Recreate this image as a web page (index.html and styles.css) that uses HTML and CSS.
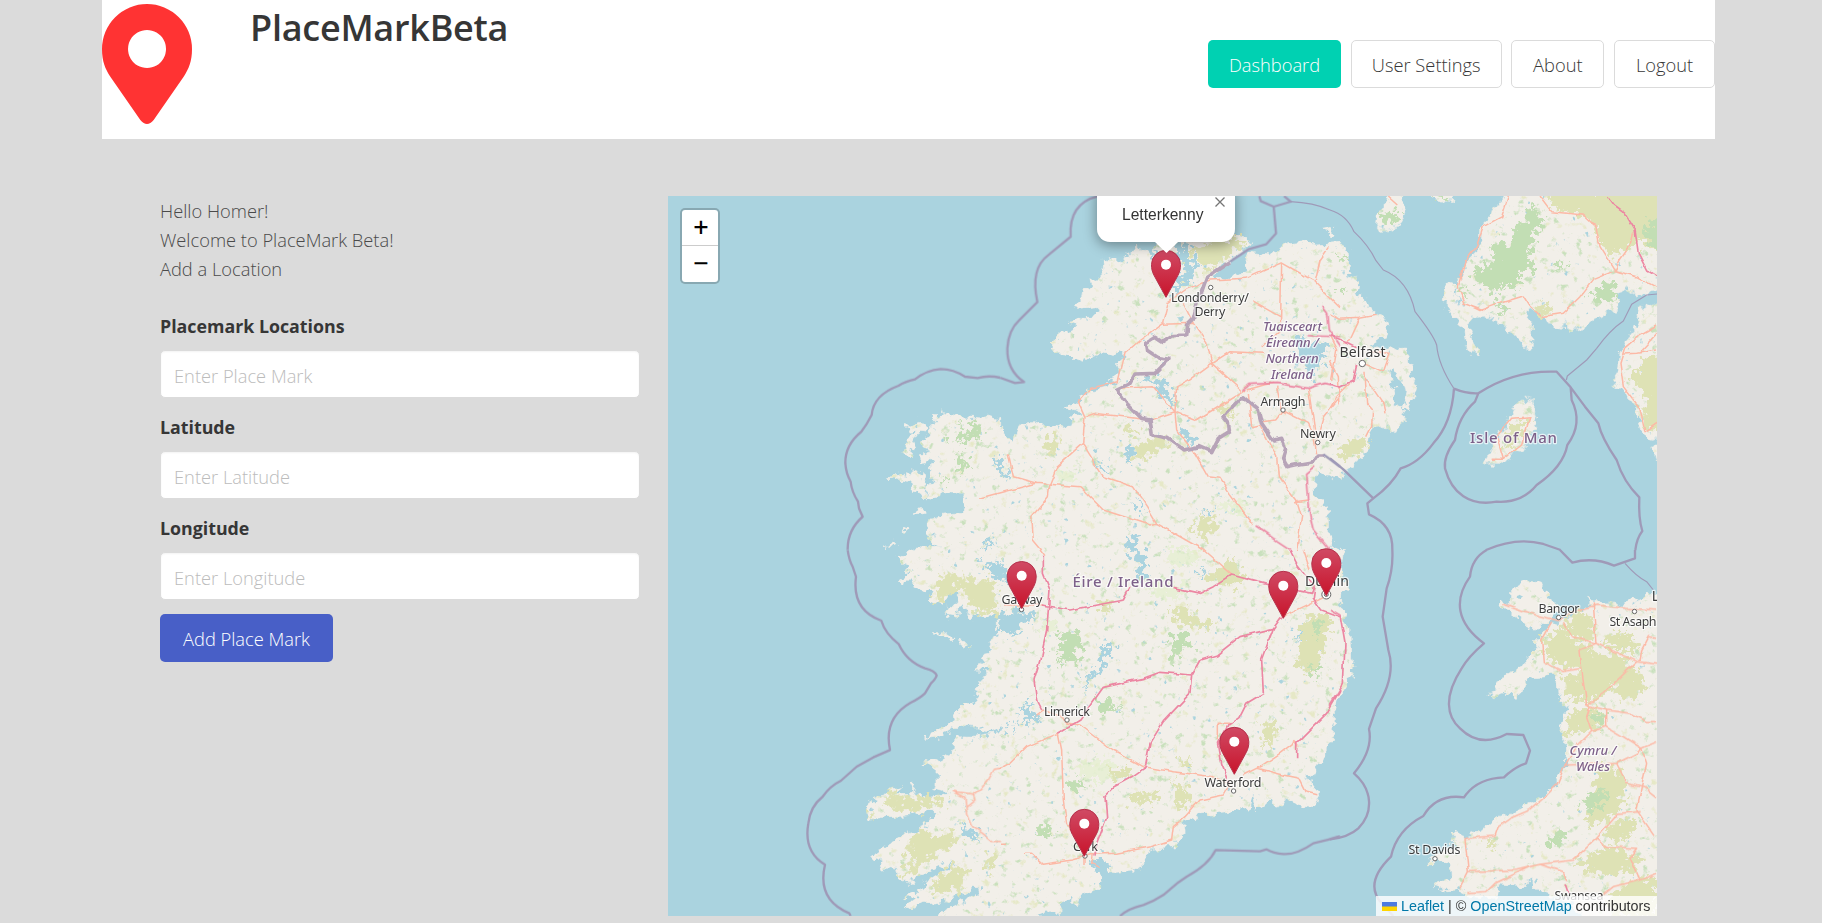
FILE: index.html
```html
<!DOCTYPE html>
<html lang="en">
<head>
<meta charset="utf-8">
<title>PlaceMarkBeta</title>
<link rel="stylesheet" href="styles.css">
</head>
<body>
<header class="navbar">
  <svg class="logo" viewBox="36 12 270 360" aria-hidden="true"><path fill="#f33" fill-rule="evenodd" d="M36 147A135 135 0 0 1 306 147C306 185 296 206 282 229L191 360Q171 384 151 360L60 229C46 206 36 185 36 147ZM171 90a57 57 0 1 0 .1 0Z"/></svg>
  <h1 class="title">PlaceMarkBeta</h1>
  <nav class="buttons">
    <a class="button is-primary">Dashboard</a>
    <a class="button wide">User Settings</a>
    <a class="button about">About</a>
    <a class="button logout">Logout</a>
  </nav>
</header>
<main class="columns">
  <section class="panel">
    <p class="intro">Hello Homer!<br>Welcome to PlaceMark Beta!<br>Add a Location</p>
    <form class="form">
      <label class="label" for="name">Placemark Locations</label>
      <input class="input" id="name" placeholder="Enter Place Mark">
      <label class="label" for="lat">Latitude</label>
      <input class="input" id="lat" placeholder="Enter Latitude">
      <label class="label" for="lng">Longitude</label>
      <input class="input" id="lng" placeholder="Enter Longitude">
      <button class="button is-link" type="button">Add Place Mark</button>
    </form>
  </section>
  <section class="map">
    <svg class="tiles" viewBox="668 196 989 720">
      <defs>
        <filter id="terrain" filterUnits="userSpaceOnUse" x="660" y="190" width="1010" height="733" color-interpolation-filters="sRGB">
          <feTurbulence type="fractalNoise" baseFrequency=".11" numOctaves="3" seed="4" result="n"/>
          <feColorMatrix in="n" values="1 0 0 0 0 0 1 0 0 0 0 0 1 0 0 0 0 0 0 1" result="n1"/>
          <feDisplacementMap in="SourceGraphic" in2="n1" scale="13" xChannelSelector="R" yChannelSelector="G" result="land"/>
          <feTurbulence type="fractalNoise" baseFrequency=".12" numOctaves="4" seed="11" result="v"/>
          <feColorMatrix in="v" values="0 0 0 0 .79 0 0 0 0 .88 0 0 0 0 .74 6 0 0 0 -3.85" result="green"/>
          <feComposite in="green" in2="land" operator="in" result="g"/>
          <feTurbulence type="fractalNoise" baseFrequency=".1" numOctaves="4" seed="29" result="w"/>
          <feColorMatrix in="w" values="0 0 0 0 .9 0 0 0 0 .91 0 0 0 0 .78 0 6 0 0 -4" result="tan"/>
          <feComposite in="tan" in2="land" operator="in" result="t"/>
          <feTurbulence type="fractalNoise" baseFrequency=".13" numOctaves="3" seed="63" result="x"/>
          <feColorMatrix in="x" values="0 0 0 0 .67 0 0 0 0 .83 0 0 0 0 .87 0 0 10 0 -7.5" result="pond"/>
          <feComposite in="pond" in2="land" operator="in" result="p"/>
          <feMerge><feMergeNode in="land"/><feMergeNode in="t"/><feMergeNode in="g"/><feMergeNode in="p"/></feMerge>
        </filter>
        <filter id="rough" filterUnits="userSpaceOnUse" x="660" y="190" width="1010" height="733" color-interpolation-filters="sRGB">
          <feTurbulence type="fractalNoise" baseFrequency=".16" numOctaves="3" seed="8"/>
          <feColorMatrix values="1 0 0 0 0 0 1 0 0 0 0 0 1 0 0 0 0 0 0 1" result="n"/>
          <feDisplacementMap in="SourceGraphic" in2="n" scale="24" xChannelSelector="R" yChannelSelector="G"/>
        </filter>
        <filter id="wobble" filterUnits="userSpaceOnUse" x="660" y="190" width="1010" height="733" color-interpolation-filters="sRGB">
          <feTurbulence type="fractalNoise" baseFrequency=".08" numOctaves="2" seed="3"/>
          <feColorMatrix values="1 0 0 0 0 0 1 0 0 0 0 0 1 0 0 0 0 0 0 1" result="n"/>
          <feDisplacementMap in="SourceGraphic" in2="n" scale="5" xChannelSelector="R" yChannelSelector="G"/>
        </filter>
        <linearGradient id="pinfill" x1="0" y1="0" x2="0" y2="1"><stop offset="0" stop-color="#d04a64"/><stop offset="1" stop-color="#c8142b"/></linearGradient>
        <g id="pin" transform="scale(.3333)"><path fill="url(#pinfill)" stroke="#b5304a" stroke-width="3" d="M0 0L-36 -66C-42 -78 -43.500 -86 -43.500 -98A43.500 43 0 0 1 43.500 -98C43.500 -86 42 -78 36 -66Z"/><circle cy="-98" r="15" fill="#fff"/></g>
      </defs>
      <rect x="668" y="196" width="989" height="720" fill="#aad3df"/>

      <g filter="url(#terrain)" fill="#f2efe9" stroke="#f2efe9" stroke-width="2">
        <g transform="translate(660 190) scale(.33333)">
          <path d="M1022 685L990 675L975 685L940 682L900 680L870 672L842 665L820 682L835 698L815 705L818 730L800 742L790 765L805 790L782 795L785 815L810 812L820 825L805 832L822 850L815 865L830 880L805 885L795 915L800 930L830 920L845 908L880 912L915 912L905 935L915 960L900 975L850 978L810 990L805 1010L803 1040L820 1060L835 1072L760 1075L762 1082H1022Z"/>
          <path d="M775 688L745 710L742 722L760 730L748 750L735 780L732 800L748 803L752 775L765 745L775 730L800 732L808 715L790 705ZM693 868L715 850L745 855L752 842L775 850L785 842L795 855L788 870L795 895L790 930L775 905L757 900L755 875L735 868L705 872ZM757 968L780 952L792 962L770 972ZM728 1022L740 1013L746 1019L733 1027ZM675 1072L700 1060L712 1065L705 1072Z"/>
        </g>
        <g transform="translate(1000 190) scale(.33333)">
          <path d="M-2 685L0 725L20 750L38 755L50 720L70 695L100 695L130 705L160 702L185 712L215 708L220 690L210 678L240 675L242 660L190 658L215 645L240 635L258 605L290 598L330 590L350 575L325 572L360 550L350 520L378 495L365 480L340 495L300 490L270 500L255 510L235 515L210 500L180 495L148 460L185 430L225 420L230 405L205 400L230 385L275 385L300 370L295 350L235 355L225 340L245 325L250 300L275 290L270 265L300 255L310 240L310 205L340 212L370 215L385 190L410 165L425 185L455 190L480 150L540 160L600 140L690 140L705 130L760 155L735 175L640 255L640 262L700 265L735 245L745 185L800 195L830 180L870 155L910 150L950 165L1022 160V865L985 860L960 845L945 865L940 895L950 915L975 930L985 965L985 1020L995 1060L1022 1082H-2Z"/>
          <path d="M970 118L1000 112L1008 135L998 137L995 122Z"/>
        </g>
        <g transform="translate(1330 190) scale(.33333)">
          <path d="M-2 165L25 162L60 185L65 215L58 260L85 265L80 300L110 340L135 370L160 375L177 405L170 435L135 455L120 475L190 480L215 475L235 500L240 560L258 590L245 635L235 665L220 640L225 600L215 570L190 540L178 550L185 590L195 625L190 645L218 645L225 690L190 725L170 712L130 715L110 745L115 775L85 810L45 840L35 860L-2 862Z"/>
          <path d="M530 0L520 35L490 45L480 80L455 105L455 150L430 190L405 215L405 245L388 275L385 290L378 315L400 345L380 340L372 290L355 282L342 300L340 330L355 370L385 395L405 430L415 480L445 497L430 455L415 415L425 385L465 375L500 390L540 425L580 465L605 472L610 440L610 400L590 385L597 350L640 380L665 410L700 418L705 385L712 420L770 412L800 385L840 360L865 360L870 305L900 300L920 308L1010 302V0ZM170 0L165 55L142 75L140 105L150 122L180 115L210 105L230 80L218 55L222 0ZM298 0V18L330 32L370 35L375 0ZM1010 315L960 350L930 360L915 420L880 460L870 490L865 545L850 570L890 615L920 655L925 700L960 750L1010 735ZM1010 765L968 770L981 815H1010ZM610 622L608 680L626 690L610 725L585 765L545 795L510 820L465 818L490 770L530 700L555 650Z"/>
        </g>
        <g transform="translate(660 550) scale(.33333)">
          <path d="M762 -2L730 15L710 25L740 40L730 55L750 70L715 95L725 103L745 90L765 110L800 120L815 130L805 150L845 163L865 140L880 118L895 125L888 160L870 170L855 195L885 200L895 170L905 155L918 190L930 203L1022 190V-2Z"/>
          <path d="M820 245L850 245L890 272L875 275L835 255ZM898 285L912 272L916 283L905 291ZM920 296L935 290V297L925 299ZM1022 240L1000 265L985 300L970 320L965 345L945 360L985 362L960 400L940 435L945 460L915 465L890 490L865 525L795 565L830 562L865 545L890 530L930 520L950 540L1000 545L1022 535ZM1022 550L940 562L890 560L880 575L878 605L830 630L790 638L828 655L828 700L812 712L850 722L860 735L780 740L760 735L770 700L755 700L765 720L740 732L715 735L718 710L690 715L675 735L640 750L620 765L622 808L680 800L740 798L800 785L845 785L800 815L795 835L730 860L690 880L650 910L635 920L665 940L670 970L690 950L715 955L720 985L735 1000L800 970L850 945L895 935L840 970L800 995L785 1015L740 1040L760 1050L735 1070L760 1078L800 1055L850 1050L900 1035L945 1010L950 1030L920 1045L870 1070L825 1118H1022Z"/>
        </g>
        <g transform="translate(1000 550) scale(.33333)">
          <path d="M-2 -2H1022V430L1000 490L1000 560L975 600L945 660L940 680L920 675L945 710L960 730L945 770L900 765L870 752L830 765L810 740L790 760L770 785L755 730L745 770L700 785L600 795L550 815L555 850L520 890L450 895L440 930L405 960L325 970L310 940L295 960L310 990L290 1020L235 1045L230 1070L220 1050L180 1065L180 1090L125 1090L110 1118H-2Z"/>
        </g>
        <g transform="translate(1330 550) scale(.33333)">
          <path d="M-2 -2L40 -2L35 40L20 75L50 100L52 120L20 125L5 150L35 175L60 240L62 330L75 350L50 400L25 450L20 480L-2 500ZM-2 540L8 580L-2 585Z"/>
          <path d="M545 110L590 92L635 100L640 125L660 150L690 170L660 215L610 240L580 225L555 195L530 180L505 165L510 152L545 158ZM1010 135L950 133L910 150L870 165L800 155L770 145L785 160L740 195L680 215L640 245L620 265L620 300L580 345L545 365L510 385L480 440L530 425L555 445L570 430L580 395L610 380L680 375L685 430L710 480L690 535L712 590L705 650L680 700L640 740L600 765L540 792L505 800L455 845L405 860L375 850L370 870L380 890L340 895L290 935L360 935L365 985L300 1005L345 1022L380 1020L420 1040L500 1045L510 1005L570 1010L600 990L625 1025L680 1040L720 1050L760 1118H1010Z"/>
        </g>
      </g>

      <g filter="url(#rough)">
        <g fill="#dee2b5">
          <path transform="translate(1330 190) scale(.33333)" d="M640 0L680 60L740 70L790 95L820 170L850 195L900 180L920 150L975 180L1010 170V0ZM610 355L650 335L660 375L635 380ZM1010 490L940 510L905 560L950 620L935 680L960 725L1010 690ZM15 790L60 750L110 740V770L50 810ZM520 760L545 700L600 690L570 750L535 780Z"/>
          <path transform="translate(1000 190) scale(.33333)" d="M570 175L650 150L740 150L690 190L620 245L600 230ZM130 760L170 730L180 760L150 810ZM360 715L400 705L410 740L370 730ZM400 770L470 740L510 760L440 800L400 805ZM650 650L690 650L700 680L660 670ZM570 1010L620 970L650 1000L620 1050Z"/>
          <path transform="translate(660 550) scale(.33333)" d="M845 80L870 65L925 90L1000 90L1015 190L950 190L920 140L890 110L850 155L820 140ZM675 730L700 715L715 745L770 740L850 740L860 755L790 780L710 780L680 770ZM750 860L800 840L820 870L850 845L880 850L900 880L830 910L780 950L740 980L725 970L765 930L720 915L750 890ZM800 1020L850 970L900 940L920 970L910 1010L850 1030ZM970 940L990 910L1010 940L990 970ZM625 780L638 780V805H625Z"/>
          <path transform="translate(1000 550) scale(.33333)" d="M900 230L940 190L995 205L980 270L960 330L930 380L890 340L900 290ZM790 520L830 515L820 570L790 600ZM520 690L570 720L550 780L530 760ZM330 660L410 650L390 680L330 690ZM380 730L480 725L470 750L390 755ZM300 150L340 160L310 200ZM500 180L560 170L600 210L640 220L600 240L520 210ZM600 90L700 30L740 80L700 110ZM530 630L560 620L580 640L540 645Z"/>
          <path transform="translate(1330 550) scale(.33333)" d="M700 230L740 180L790 200L790 270L720 260ZM640 270L690 230L740 280L790 300L760 350L700 350L650 320ZM750 300L860 320L920 350L900 380L820 430L770 470L740 400ZM690 370L740 380L760 450L720 460ZM820 260L870 245L910 260L930 300L840 300ZM850 390L930 365L950 420L870 460ZM710 490L770 470L820 490L810 540L750 545L710 560ZM800 650L860 650L890 700L870 780L800 830L760 800L790 740ZM740 930L840 890L930 920L920 960L830 980L770 960ZM820 840L880 810L930 810L900 860L850 880ZM460 880L500 880L490 900ZM830 1040L900 990L981 980V1100H850Z"/>
        </g>
        <g fill="#c2deb4">
          <path transform="translate(1330 190) scale(.33333)" d="M430 240L480 225L500 210L480 180L500 150L540 165L560 100L590 90L590 50L630 60L640 120L600 130L610 180L590 190L620 240L570 250L550 300L520 280L500 320L470 280L440 280ZM670 220L710 210L700 240ZM150 75L185 65L215 70L210 90L170 100ZM930 110L1010 80V170L960 170ZM310 18H370L350 32ZM490 340L540 350L520 375ZM770 320L850 270L860 320L830 340ZM20 190L40 200L30 215ZM30 310L45 300L40 325ZM395 285H410V310L395 305Z"/>
          <path transform="translate(660 190) scale(.33333)" d="M895 785L915 800L925 840L905 860L895 830ZM935 700L965 705L970 740L930 740L900 770L895 745ZM850 860L865 875L850 880ZM890 690L900 710L890 720ZM840 735L865 745L870 760Z"/>
          <path transform="translate(1000 550) scale(.33333)" d="M175 250L205 255L240 240L235 270L250 290L225 300L240 340L200 330L180 350L190 310L160 310L185 285ZM500 270L550 245L580 290L550 290L550 310L510 330L520 290ZM290 460L340 440L330 465L370 470L330 480L310 500ZM200 700L240 685L260 710L220 725ZM940 210L970 220L950 270ZM930 350H970L940 390ZM100 835L160 825L150 860L110 850Z"/>
          <path transform="translate(1330 550) scale(.33333)" d="M770 730L820 720L830 750L790 790L760 780ZM650 870L690 835L710 860L680 890L650 890ZM780 490L820 490L810 520L780 510Z"/>
        </g>
        <g fill="#e4f0cf" opacity=".7">
          <path transform="translate(1000 550) scale(.33333)" d="M210 650L330 620L340 690L260 690ZM130 200L170 220L160 260L130 250ZM440 90L560 100L540 150L450 130ZM500 0L600 0L590 40L520 50Z"/>
          <path transform="translate(1000 190) scale(.33333)" d="M160 850L210 835L240 870L200 880ZM650 940L730 930L740 970L690 970Z"/>
        </g>
        <g fill="#aad3df">
          <path transform="translate(1000 190) scale(.33333)" d="M530 160L560 160L585 215L580 265L510 310L495 300L555 250L535 200ZM890 435L910 430L920 470L980 450L975 500L940 545L935 580L925 545L895 510ZM415 570L480 560L510 600L530 660L490 620L460 585ZM375 765L400 765L395 810L385 825ZM535 715L560 715L590 765L570 770ZM295 805L320 850L300 840ZM415 910L425 960L410 960ZM385 1050L405 1030L420 1080H385ZM610 970L640 950L630 970ZM0 800L15 850L30 880L0 850ZM450 170L465 180L475 230L460 220Z"/>
          <path transform="translate(1000 550) scale(.33333)" d="M385 0L435 5L440 80L410 95L415 35ZM310 285L350 285L320 320L310 370L270 380L260 430L255 385L300 350ZM-5 195L100 180L95 215L60 225L40 255L-5 248ZM-5 535L40 530L80 495L60 480L85 455L100 470L90 490L130 505L80 515L-5 548ZM-5 30L25 60L20 95L-5 80ZM590 80L615 55L605 85ZM885 250L900 235L890 280ZM275 930L330 935L320 960L285 955ZM890 235L905 250L890 270Z"/>
          <path transform="translate(660 550) scale(.33333)" d="M960 25L1025 50V95L985 60ZM900 830L940 840L960 870L920 860Z"/>
          <path transform="translate(660 190) scale(.33333)" d="M1005 795L1025 800V850L1005 830ZM1000 1025L1000 1075L970 1080Z"/>
        </g>
      </g>

      <g filter="url(#wobble)" fill="none" stroke-linejoin="round">
        <g stroke="#fcb9a6" stroke-width="4.500">
          <path transform="translate(1000 190) scale(.33333)" d="M505 335L560 297L630 270L740 265L845 218L910 255L945 275L1020 350M845 220L842 380L840 420L785 470M945 275L960 210L985 175M505 335L488 400L420 450L375 490L355 575L270 595L235 635L255 680L248 760L170 830L150 880L145 920L95 980L100 1050L125 1080M488 403L580 400L620 455L635 520L725 600M550 340L580 400M635 520L560 575L530 590L525 665L450 690L285 670L255 680M355 595L460 590L525 665L530 720L585 790L625 860L660 865L690 910L760 1005M635 520L690 485L790 490M735 600L590 690L525 665M790 585L820 580M248 760L310 860L400 890L440 950L470 1000L610 1080M-60 925L110 880L240 890L310 960L450 1005L470 1000M25 790L40 860L110 880M745 610L755 710L780 705L830 800L835 860L890 930L905 980L890 1080M740 600L810 580M830 590L845 660L925 700L940 730L950 790M785 695L830 690L850 665M925 595L945 725M950 750L970 680L1020 620M760 335L840 380M885 935L925 930M990 510L1015 560L1020 640"/>
          <path transform="translate(1330 190) scale(.33333)" d="M0 375L25 388L90 385L140 375M90 385L60 450L40 460M0 440L20 480L5 570M120 485L180 490L160 545L100 520M105 545L110 640L128 660L125 710L110 740M105 560L160 640L165 670M60 580L20 620L0 655M535 18L515 80L460 110L440 170L405 215L385 290L405 340L450 362L510 340L580 318L600 350L635 380L700 370L750 320L790 268L855 242L920 260L981 293M630 18L665 65L760 75L798 110L810 170L855 242L870 210L905 160L910 130M400 340L460 362M175 18L205 45M981 405L920 440L885 470L870 520L880 590L930 655L945 725L981 700M981 480L920 490L880 492M930 485L981 430M485 808L520 808L575 765L600 680L545 685L500 740L520 808"/>
          <path transform="translate(660 550) scale(.33333)" d="M1020 655L1003 658L985 690L960 720L940 735L880 727L915 745L920 790L935 830L970 855L995 875H1020M940 735L945 750L920 770"/>
          <path transform="translate(1000 550) scale(.33333)" d="M0 657L30 640L80 590L175 550L185 600L190 750L200 820L220 850M110 495L130 480L180 500L205 520L240 525L340 600L430 650L520 665L640 680L690 700L670 735L600 750L555 800L520 830L515 870L450 890L350 910L280 913L215 930L130 943L95 910L75 910M255 920V945M280 913L275 940L300 952M730 675L780 650L840 610L885 575L895 590M770 655L850 675L895 685L915 725L955 735M655 570V520L690 520M845 200L940 155L970 140M610 0L695 75M0 883H15M910 0L930 60M15 165L130 165M120 0L135 20"/>
          <path transform="translate(1330 550) scale(.33333)" d="M520 160L600 190L685 212L740 180L800 165L890 175L981 180M790 160L798 280L750 300L755 355L700 365L640 335L635 270L665 215M700 220L725 260L798 280L920 335L981 342M920 335L820 430L770 465L755 355M770 465L830 480L900 490L950 515H981M780 470L770 500L785 545L740 590L705 645L680 705L640 745L600 780L540 805L505 830L495 858L405 865L415 965L390 1015M415 965L560 960L630 943L730 930L800 865L865 790L935 785M830 480V530L785 545M830 530L880 560L935 595L981 575M705 645L860 640L920 610L935 595L950 640L920 780L975 860M860 640L890 700L950 715L981 740M800 865L830 890L920 895L900 920L930 990L981 970M630 943L700 965L710 990M415 1028L470 1025L495 1000L600 950M930 990L850 1010L800 1050M930 335L935 300L955 260L981 265"/>
        </g>
        <g stroke="#ec86a2" stroke-width="5">
          <path transform="translate(1000 190) scale(.33333)" d="M730 600L750 583L830 580L925 595L975 580L1020 590M920 437L1020 440M1020 470L985 420L980 370L965 350M945 830L920 850L930 980L940 1020L990 1080M770 1010L820 1045L870 1078"/>
          <path transform="translate(1330 190) scale(.33333)" d="M0 437L50 455L80 470M80 525L70 570L30 592L0 580M830 18L850 45L885 70L915 120L925 190L950 240L981 260"/>
          <path transform="translate(1000 550) scale(.33333)" d="M130 20L130 70L150 120L140 240L120 330L102 390L110 450L125 480M125 165L210 180L290 165L370 150L390 112M520 112L600 130L640 110L695 75L800 103L935 130L940 110M870 0L890 40L945 110L940 145L965 180L1020 200M845 200L820 235L720 260L650 315L600 330L575 375L570 430L490 515L450 580L435 655L400 680L345 710L315 740L320 800L290 880L285 920M175 550L240 510L310 412L430 385L480 367L575 375M820 235L785 330L790 430L740 460L720 500L685 525L655 580L665 640L690 700M1020 420L980 490L890 580V625"/>
          <path transform="translate(1330 550) scale(.33333)" d="M0 178L30 195L45 280L40 400L0 465M705 1000L715 1030"/>
        </g>
      </g>

      <g filter="url(#wobble)"><path transform="translate(1000 190) scale(.33333)" fill="none" stroke="#b7a4b8" stroke-width="11" stroke-linejoin="round" d="M690 215L620 262L607 300L590 345L580 385L560 405L557 435L520 437L488 457L465 442L437 460L440 480L475 503L507 508L465 550L405 552L390 580L352 598L380 640L425 685L450 690L457 735L500 745L550 780L600 770L635 785L655 745L688 725L685 695L672 680L710 640L728 620L775 660L785 700L820 750L845 745L857 775L848 805L862 830L900 822L942 815L955 795L975 795"/></g>
      <g fill="none" stroke="#9f9ab8" stroke-width="7" stroke-linejoin="round">
        <path transform="translate(660 190) scale(.33333)" d="M1020 563Q985 555 953 564L915 560Q880 537 842 537Q800 540 765 568Q735 575 716 587Q640 615 635 675Q620 705 604 725Q555 765 556 820Q558 850 572 875Q575 905 594 935L597 955L608 980Q562 1020 563 1080"/>
        <path transform="translate(660 550) scale(.33333)" d="M563 0Q567 30 578 50L588 80Q575 180 664 212Q675 250 716 282Q740 335 795 355Q825 363 830 376Q828 385 813 400L795 430Q780 445 752 458Q670 505 690 600L640 622L590 650L543 692Q510 708 488 740Q450 770 445 820Q430 905 495 944Q470 1050 568 1090L572 1098"/>
        <path transform="translate(1000 190) scale(.33333)" d="M0 563L45 579L72 576Q20 540 22 475Q25 420 58 390L112 336Q90 235 145 195L212 140Q205 40 295 18M778 18L782 33L821 50L828 130L798 163L745 178L690 215M821 50L872 35L852 18M970 793L1020 830"/>
        <path transform="translate(1330 190) scale(.33333)" d="M0 805L40 838L130 925M372 596Q365 700 310 760Q265 820 212 835Q185 885 130 925L112 940L117 973Q190 1005 187 1080M372 596Q410 612 445 610Q550 540 680 545L722 592L765 650L805 700Q815 745 860 810Q880 875 928 922Q925 985 937 1023Q920 1045 916 1080M445 610L435 635Q385 680 375 750Q340 800 345 835C365 910 420 950 500 935Q575 940 620 885Q700 830 712 765Q760 700 725 630L722 592M468 1080Q560 1040 640 1062L692 1080"/>
        <path transform="translate(1000 550) scale(.33333)" d="M1020 858Q985 870 940 880Q890 915 850 912Q820 910 800 898L780 904L647 900Q625 945 560 980L535 997L490 1035Q460 1055 430 1065Q385 1075 360 1098"/>
        <path transform="translate(1330 550) scale(.33333)" d="M187 0Q190 60 170 115L158 200L175 300Q200 380 138 475L117 537Q130 600 72 670C130 720 130 790 85 835Q55 862 0 868M470 0Q425 25 420 80C370 150 380 220 462 280Q415 320 395 355C340 440 350 500 390 535Q450 595 530 552L580 555L600 602L588 640Q555 650 522 682Q440 685 402 742Q320 730 280 798Q200 840 183 920Q100 1000 155 1060L190 1098M690 0L727 38Q790 20 852 47L915 25V0"/>
        <g stroke-width="3.500">
          <path transform="translate(1330 190) scale(.33333)" d="M0 60Q50 75 72 125Q115 165 138 212L160 240Q235 270 255 365Q310 435 320 465Q325 525 372 596M981 312L950 315L905 343L880 393Q840 420 800 475L770 510L712 558L709 570"/>
          <path transform="translate(1000 190) scale(.33333)" d="M872 35Q940 38 990 60"/>
          <path transform="translate(1330 550) scale(.33333)" d="M885 40Q920 80 950 95L970 120"/>
        </g>
      </g>

      <g class="city-dots"><circle cx="1210.700" cy="287.500" r="2.200"/><circle cx="1362.300" cy="363.500" r="3.200"/><circle cx="1283" cy="410" r="2.200"/><circle cx="1317.700" cy="442.500" r="2.200"/><circle cx="1021.500" cy="609.500" r="2.200"/><circle cx="1326.300" cy="594.500" r="4.500"/><circle cx="1326.300" cy="594.500" r="2"/><circle cx="1067" cy="720" r="2.200"/><circle cx="1233.600" cy="791" r="2.200"/><circle cx="1085" cy="856" r="2.200"/><circle cx="1558.600" cy="617.500" r="2.200"/><circle cx="1634.500" cy="611.500" r="2.200"/><circle cx="1435" cy="858.700" r="2.200"/></g>
      <g class="city">
        <text x="1210" y="301.500" textLength="78">Londonderry/</text><text x="1210" y="316" textLength="31">Derry</text>
        <text x="1283" y="405.500" textLength="45">Armagh</text><text x="1318" y="437.500" textLength="36">Newry</text>
        <text x="1362.500" y="357" class="big" textLength="46">Belfast</text>
        <text x="1022" y="604" textLength="41">Galway</text><text x="1327" y="586" class="big" textLength="44">Dublin</text>
        <text x="1067" y="715.500" textLength="46">Limerick</text><text x="1233" y="786.500" textLength="57">Waterford</text>
        <text x="1085.500" y="851" textLength="25">Cork</text><text x="1559" y="612.500" textLength="41">Bangor</text>
        <text x="1633" y="625.500" textLength="47">St Asaph</text><text x="1655.500" y="600.500" class="big">L</text>
        <text x="1434.500" y="854" textLength="52">St Davids</text><text x="1579" y="900" textLength="49">Swansea</text>
      </g>
      <g class="region">
        <text x="1123" y="587" textLength="101">Éire / Ireland</text><text x="1513.500" y="443" textLength="87">Isle of Man</text>
        <g class="nation"><text x="1292.500" y="331" textLength="59">Tuaisceart</text><text x="1292.500" y="347" textLength="53">Éireann /</text><text x="1292" y="363" textLength="53">Northern</text><text x="1292" y="379" textLength="42">Ireland</text><text x="1593" y="755" textLength="47">Cymru /</text><text x="1593" y="770.500" textLength="34">Wales</text></g>
      </g>
      <use href="#pin" transform="translate(1166 297.300)"/>
      <use href="#pin" transform="translate(1021.700 608.500)"/>
      <use href="#pin" transform="translate(1326.300 595.700)"/>
      <use href="#pin" transform="translate(1283.300 618.300)"/>
      <use href="#pin" transform="translate(1234.300 774.300)"/>
      <use href="#pin" transform="translate(1084.300 856.300)"/>
    </svg>
    <div class="zoom"><a>+</a><a>−</a></div>
    <div class="popup">Letterkenny<svg class="close" viewBox="0 0 10 10"><path d="M.5.5l9 9M9.500.5l-9 9"/></svg><i class="tip"></i></div>
    <div class="attribution"><svg class="flag" viewBox="0 0 15 9"><path fill="#4c7be1" d="M0 0h15v5H0z"/><path fill="#ffd500" d="M0 4.500h15V9H0z"/></svg><a>Leaflet</a> | © <a>OpenStreetMap</a> contributors</div>
  </section>
</main>
</body>
</html>
```

FILE: styles.css
```css
* { box-sizing: border-box; }
html, body { margin: 0; height: 100%; overflow: hidden; }
body { background: #dbdbdb; color: #4a4a4a; font: 350 18.300px/28.800px "Open Sans", "Noto Sans", sans-serif; }
.navbar { display: flex; align-items: flex-start; width: 1613px; height: 139px; margin-left: 102px; background: #fff; }
.logo { width: 90px; height: 120px; margin-top: 4px; }
.title { margin: 6px 0 0 58px; color: #363636; font-size: 36px; font-weight: 600; line-height: 44px; letter-spacing: -.25px; }
.buttons { display: flex; gap: 9.670px; margin: 40px 0 0 auto; }
.button { display: inline-flex; align-items: center; justify-content: center; height: 48px; width: 94px; padding: 0; border: 1px solid #dbdbdb; border-radius: 5px; background: #fff; color: #363636; font: inherit; white-space: nowrap; }
.buttons .button { width: 101px; padding-top: 2px; }
.buttons .is-primary { width: 133px; background: #00d1b2; border-color: transparent; color: #fff; }
.buttons .wide { width: 151px; }
.buttons .about { width: 93px; }
.is-link { width: 173px; margin-top: 14px; padding-top: 2px; background: #485fc7; border-color: transparent; color: #fff; }
.columns { display: grid; grid-template-columns: 480px 989px; gap: 28px; margin: 57px 0 0 160px; }
.intro { margin: 1px 0 29px; }
.form { display: flex; flex-direction: column; align-items: flex-start; }
.label { height: 28px; margin-bottom: 10px; color: #363636; font-size: 17.800px; font-weight: 700; }
.input { width: 480px; height: 48px; padding: 2px 13px 0; border: 1px solid #dbdbdb; border-radius: 5px; background: #fff; box-shadow: inset 0 1px 2px rgba(10,10,10,.05); font: inherit; }
.input::placeholder { color: #bcbcbc; opacity: 1; }
.input + .label { margin-top: 15px; }
.map { position: relative; width: 989px; height: 720px; overflow: hidden; background: #aad3df; font-family: "Liberation Sans", Arial, sans-serif; font-weight: 400; }
.tiles { display: block; width: 989px; height: 720px; }
.city, .region { font-family: "Noto Sans", sans-serif; text-anchor: middle; paint-order: stroke; stroke: rgba(255,255,255,.7); stroke-width: 2.500px; stroke-linejoin: round; }
.city { font-size: 12.500px; fill: #3c3c3c; }
.big { font-size: 14px; }
.region { font-size: 15px; font-weight: 500; fill: #7d6089; }
.nation { font-size: 13px; font-style: italic; }
.city-dots { fill: #fff; stroke: #666; stroke-width: 1px; }
.zoom { position: absolute; top: 12px; left: 12px; width: 40px; height: 76px; border: 2px solid rgba(0,0,0,.2); border-radius: 5px; background: #fff; background-clip: padding-box; }
.zoom a { display: block; height: 36px; padding-left: 2px; color: #000; font: 500 27px/34px "Noto Sans", sans-serif; text-align: center; }
.zoom a:first-child { border-bottom: 1px solid #ccc; }
.popup { position: absolute; top: -14px; left: 429px; width: 138px; height: 60px; padding: 21px 0 0 25px; border-radius: 13px; background: #fff; box-shadow: 0 3px 14px rgba(0,0,0,.4); color: #333; font-size: 15.600px; line-height: 24px; }
.close { position: absolute; top: 15px; right: 10px; width: 10px; height: 10px; fill: none; stroke: #757575; stroke-width: 1.300; }
.tip { position: absolute; top: 60px; left: 58px; width: 23px; height: 11px; background: #fff; clip-path: polygon(0 0, 100% 0, 50% 100%); }
.attribution { position: absolute; right: 0; bottom: 0; height: 20px; width: 281px; padding-left: 6px; background: rgba(255,255,255,.8); color: #333; font-size: 14.350px; line-height: 20px; white-space: nowrap; }
.attribution a { color: #0078a8; }
.flag { width: 15px; height: 9px; margin-right: 4px; }
```
